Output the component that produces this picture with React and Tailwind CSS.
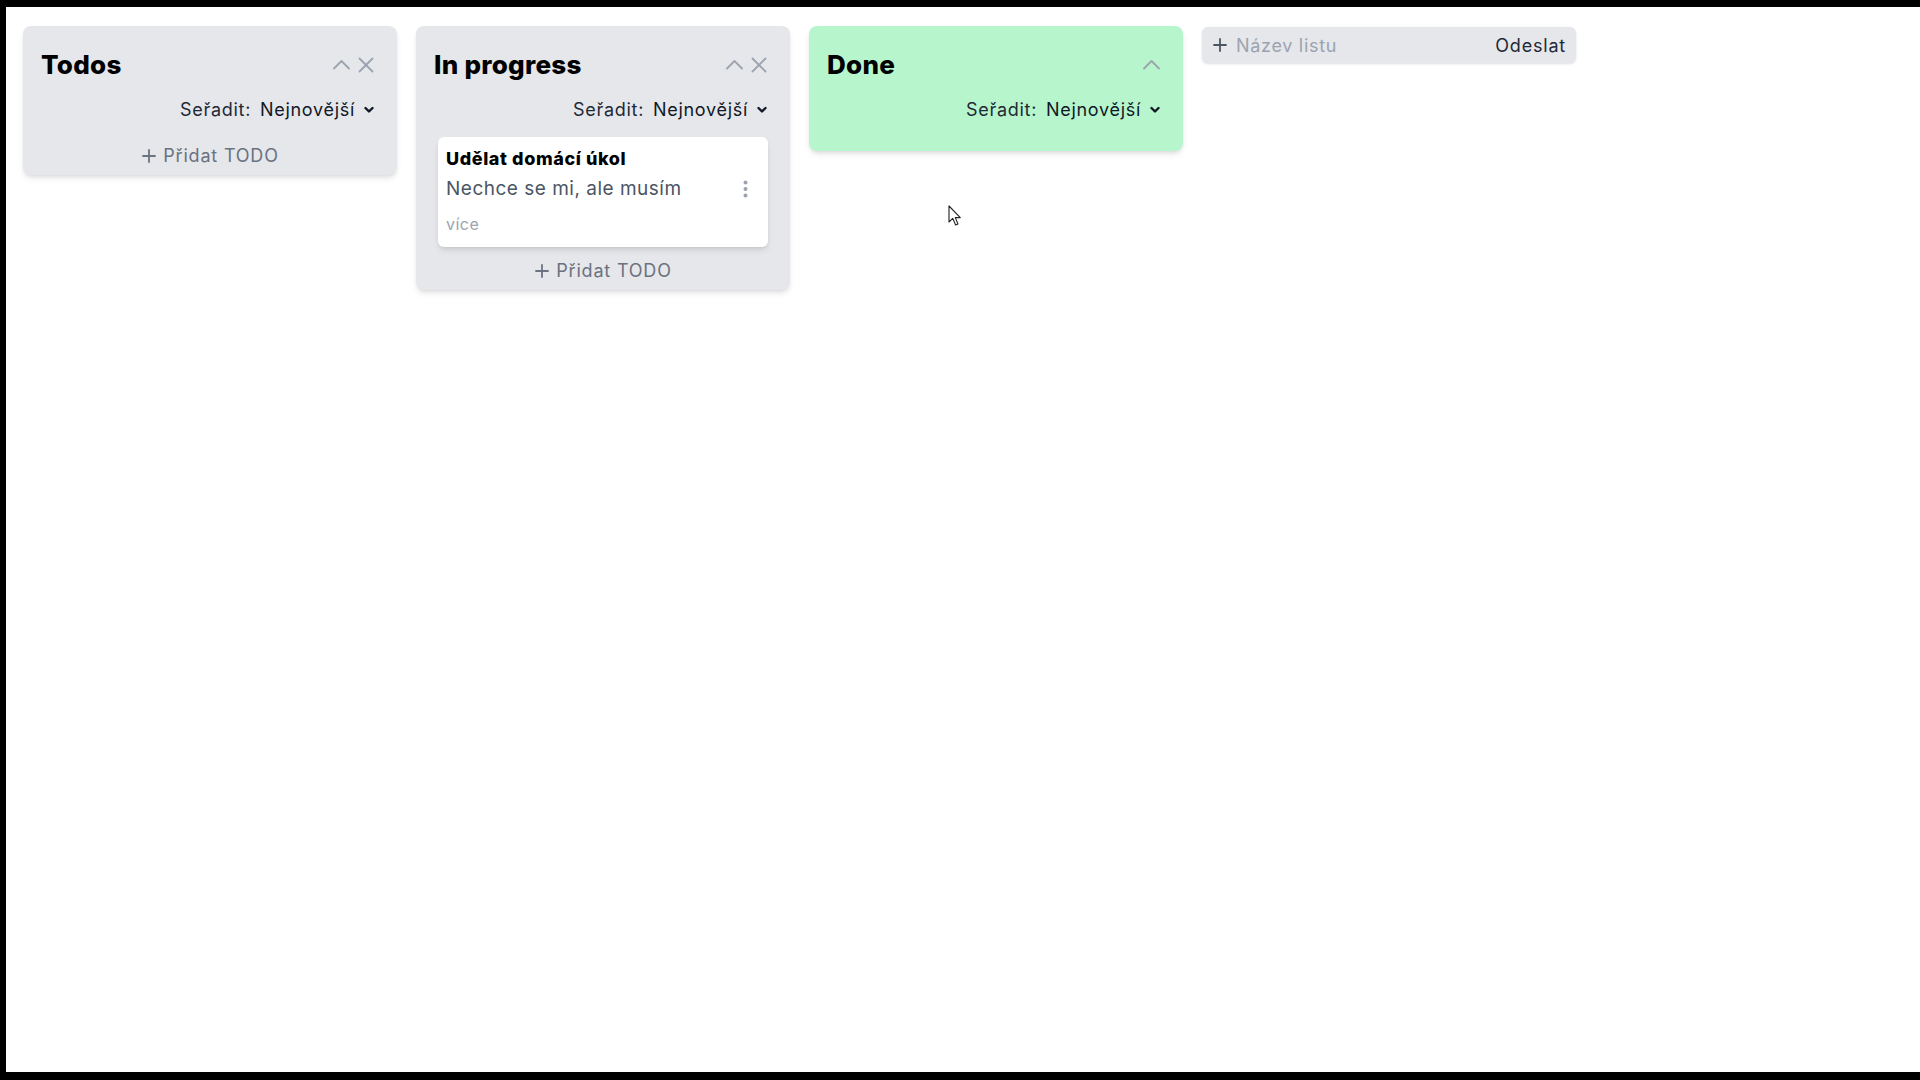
import React, { useState } from "react";

const lists = [
    { id: 1, title: "Todos", color: "bg-[#e5e7eb]", closable: true, canAdd: true, todos: [] },
    {
        id: 2,
        title: "In progress",
        color: "bg-[#e5e7eb]",
        closable: true,
        canAdd: true,
        todos: [{ id: 1, title: "Udělat domácí úkol", text: "Nechce se mi, ale musím" }],
    },
    { id: 3, title: "Done", color: "bg-[#b7f6cc]", closable: false, canAdd: false, todos: [] },
];

const ChevronUp = () => (
    <svg width="17" height="16" viewBox="0 0 17 16" fill="none" stroke="#9ca3af" strokeWidth="1.8" strokeLinecap="round" strokeLinejoin="round">
        <polyline points="1,11.5 8.5,4 16,11.5" />
    </svg>
);

const Close = () => (
    <svg width="16" height="16" viewBox="0 0 16 16" fill="none" stroke="#9ca3af" strokeWidth="1.8" strokeLinecap="round">
        <line x1="1.5" y1="1.5" x2="14.5" y2="14.5" />
        <line x1="14.5" y1="1.5" x2="1.5" y2="14.5" />
    </svg>
);

const ChevronDown = () => (
    <svg width="10" height="8" viewBox="0 0 10 8" fill="none" stroke="#111827" strokeWidth="2.4" strokeLinecap="round" strokeLinejoin="round">
        <polyline points="1.5,2 5,5.5 8.5,2" />
    </svg>
);

const Plus = ({ color = "#6b7280" }) => (
    <svg width="14" height="14" viewBox="0 0 14 14" fill="none" stroke={color} strokeWidth="1.8" strokeLinecap="round">
        <line x1="7" y1="1" x2="7" y2="13" />
        <line x1="1" y1="7" x2="13" y2="7" />
    </svg>
);

const Dots = () => (
    <svg width="5" height="18" viewBox="0 0 5 18" fill="#9ca3af">
        <circle cx="2.5" cy="2.5" r="2" />
        <circle cx="2.5" cy="9" r="2" />
        <circle cx="2.5" cy="15.5" r="2" />
    </svg>
);

const TodoCard = ({ todo }) => (
    <div className="bg-white rounded-md shadow-md pl-[8px] pr-[20px] pt-[11px] pb-[12px]">
        <div className="text-[18px] leading-[22px] font-extrabold text-black tracking-[0.6px]">{todo.title}</div>
        <div className="flex items-center justify-between mt-[7px]">
            <span className="text-[19px] leading-[24px] text-[#4b5563] tracking-[0.5px]">{todo.text}</span>
            <Dots />
        </div>
        <div className="text-[16px] leading-[22px] text-[#9ca3af] tracking-[0.5px] mt-[12px]">více</div>
    </div>
);

const List = ({ list }) => {
    const hasTodos = list.todos.length > 0;

    return (
        <div className={`w-[374px] shrink-0 rounded-lg shadow-md ${list.color} pl-[18px] pr-[23px] pt-[23px] ${list.canAdd ? "pb-[7px]" : "pb-[29px]"}`}>
            {/* Header */}
            <div className="flex items-center justify-between h-[32px]">
                <h2 className="text-[26px] leading-[32px] font-extrabold text-black tracking-[0.01em]">{list.title}</h2>
                <div className="flex items-center gap-[8px]">
                    <ChevronUp />
                    {list.closable && <Close />}
                </div>
            </div>

            {/* Sort */}
            <div className="flex items-center justify-end mt-[17px] text-[18px] leading-[24px] text-[#1f2937] tracking-[0.7px]">
                <span>Seřadit:</span>
                <span className="ml-[9px] text-[#111827]">Nejnovější</span>
                <span className="ml-[9px]">
                    <ChevronDown />
                </span>
            </div>

            {hasTodos && (
                <div className="flex flex-col gap-2 mt-[15px] -mr-[1px] ml-[4px]">
                    {list.todos.map((todo) => (
                        <TodoCard key={todo.id} todo={todo} />
                    ))}
                </div>
            )}

            {list.canAdd && (
                <button className={`w-full flex items-center justify-center gap-[7px] pl-[6px] text-[18px] leading-[24px] text-[#6b7280] tracking-[0.8px] ${hasTodos ? "mt-[12px]" : "mt-[22px]"}`}>
                    <Plus />
                    <span>Přidat TODO</span>
                </button>
            )}
        </div>
    );
};

const Cursor = () => (
    <svg className="absolute left-[942px] top-[198px]" width="14" height="22" viewBox="0 0 14 22">
        <path d="M1 1 L1 17 L4.8 13.4 L7.6 20 L10 19 L7.3 12.6 L12.3 12.6 Z" fill="white" stroke="#222" strokeWidth="1.1" strokeLinejoin="round" />
    </svg>
);

const App = () => {
    const [name, setName] = useState("");

    return (
        <div className="relative h-screen bg-white border-t-[7px] border-l-[6px] border-b-[8px] border-black font-['Inter',sans-serif]">
            <div className="flex items-start gap-[19px] pl-[17px] pt-[19px]">
                {lists.map((list) => (
                    <List key={list.id} list={list} />
                ))}

                {/* New list */}
                <div className="w-[374px] shrink-0 h-[36px] mt-[1px] rounded-md bg-[#e5e7eb] flex items-center pl-[11px] pr-[10px] shadow-sm">
                    <Plus color="#4b5563" />
                    <input
                        value={name}
                        onChange={(e) => setName(e.target.value)}
                        placeholder="Název listu"
                        className="flex-1 min-w-0 ml-[9px] bg-transparent outline-none text-[18px] tracking-[0.7px] text-[#1f2937] placeholder:text-[#9ca3af]"
                    />
                    <button className="text-[18px] tracking-[0.8px] text-[#1f2937]">Odeslat</button>
                </div>
            </div>
            <Cursor />
        </div>
    );
};

export default App;
